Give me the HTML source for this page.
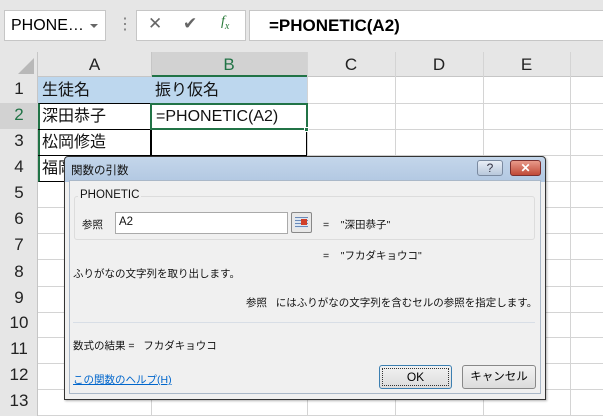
<!DOCTYPE html><html><head><meta charset="utf-8"><style>
*{margin:0;padding:0;box-sizing:border-box}
body{width:603px;height:416px;overflow:hidden;background:#fff;font-family:"Liberation Sans","Noto Sans CJK JP",sans-serif;position:relative}
.a{position:absolute}
.hl{position:absolute;height:1px;background:#d4d4d4}
.vl{position:absolute;width:1px;background:#d4d4d4}
.rh{position:absolute;left:0;width:38px;text-align:center;font-size:17px;color:#222}
.ch{position:absolute;top:52px;height:25px;text-align:center;font-size:17px;line-height:25px;color:#222}
.cell{position:absolute;font-size:16px;line-height:25px;padding-left:4px;padding-top:1px;color:#111}
.dt{position:absolute;font-size:10.5px;color:#111;white-space:nowrap}
</style></head><body>
<div class="a" style="left:0;top:0;width:603px;height:52px;background:#e6e6e6"></div>
<div class="a" style="left:4px;top:10px;width:102px;height:31px;background:#fff;border:1px solid #c6c6c6;font-size:16px;line-height:29px;padding-left:6px;white-space:nowrap;overflow:hidden">PHONE…</div>
<div class="a" style="left:90px;top:24px;width:0;height:0;border-left:4px solid transparent;border-right:4px solid transparent;border-top:4px solid #666"></div>
<div class="a" style="left:117px;top:14px;font-size:16px;color:#777">⋮</div>
<div class="a" style="left:136px;top:10px;width:110px;height:31px;background:#fff;border:1px solid #c6c6c6"></div>
<div class="a" style="left:148px;top:14px;font-size:17px;color:#666">✕</div>
<div class="a" style="left:183px;top:14px;font-size:17px;color:#666">✔</div>
<div class="a" style="left:221px;top:14px;font-size:14px;color:#2a7a3a;font-style:italic;font-family:'Liberation Serif',serif">f<sub style="font-size:10px">x</sub></div>
<div class="a" style="left:249px;top:10px;width:360px;height:31px;background:#fff;border:1px solid #c6c6c6;font-size:17px;font-weight:bold;line-height:29px;padding-left:19px">=PHONETIC(A2)</div>
<!-- headers -->
<div class="a" style="left:0;top:52px;width:603px;height:25px;background:#e6e6e6;border-bottom:1px solid #c6c6c6"></div>
<div class="a" style="left:0;top:52px;width:38px;height:364px;background:#e6e6e6;border-right:1px solid #c6c6c6"></div>
<div class="a" style="left:18px;top:58px;width:0;height:0;border-left:16px solid transparent;border-bottom:16px solid #b8b8b8"></div>
<div class="ch" style="left:38px;width:113px">A</div>
<div class="ch" style="left:151px;width:156px;background:#d2d2d2;border-bottom:2px solid #217346;color:#217346">B</div>
<div class="ch" style="left:307px;width:88px">C</div>
<div class="ch" style="left:395px;width:88px">D</div>
<div class="ch" style="left:483px;width:87px">E</div>
<div class="vl" style="left:151px;top:52px;height:25px;background:#c6c6c6"></div>
<div class="vl" style="left:307px;top:52px;height:364px"></div>
<div class="vl" style="left:395px;top:52px;height:364px"></div>
<div class="vl" style="left:483px;top:52px;height:364px"></div>
<div class="vl" style="left:570px;top:52px;height:364px"></div>
<div class="vl" style="left:151px;top:77px;height:339px"></div>
<div class="a" style="left:0;top:103px;width:38px;height:26px;background:#d2d2d2"></div>
<div class="hl" style="left:38px;top:103px;width:565px"></div>
<div class="hl" style="left:38px;top:129px;width:565px"></div>
<div class="hl" style="left:38px;top:155px;width:565px"></div>
<div class="hl" style="left:38px;top:181px;width:565px"></div>
<div class="hl" style="left:38px;top:207px;width:565px"></div>
<div class="hl" style="left:38px;top:233px;width:565px"></div>
<div class="hl" style="left:38px;top:259px;width:565px"></div>
<div class="hl" style="left:38px;top:286px;width:565px"></div>
<div class="hl" style="left:38px;top:312px;width:565px"></div>
<div class="hl" style="left:38px;top:337px;width:565px"></div>
<div class="hl" style="left:38px;top:363px;width:565px"></div>
<div class="hl" style="left:38px;top:389px;width:565px"></div>
<div class="hl" style="left:38px;top:415px;width:565px"></div>
<div class="rh" style="top:79px">1</div>
<div class="rh" style="top:105px;color:#217346">2</div>
<div class="rh" style="top:131px">3</div>
<div class="rh" style="top:157px">4</div>
<div class="rh" style="top:183px">5</div>
<div class="rh" style="top:209px">6</div>
<div class="rh" style="top:235px">7</div>
<div class="rh" style="top:262px">8</div>
<div class="rh" style="top:288px">9</div>
<div class="rh" style="top:313px">10</div>
<div class="rh" style="top:339px">11</div>
<div class="rh" style="top:365px">12</div>
<div class="rh" style="top:391px">13</div>
<!-- cells -->
<div class="a" style="left:38px;top:77px;width:269px;height:26px;background:#bdd7ee"></div>
<div class="cell" style="left:38px;top:77px">生徒名</div>
<div class="cell" style="left:151px;top:77px">振り仮名</div>
<div class="a" style="left:38px;top:103px;width:113px;height:79px;border:1px solid #000;border-left:2px solid #217346"></div>
<div class="a" style="left:38px;top:129px;width:113px;height:1px;background:#000"></div>
<div class="a" style="left:38px;top:155px;width:113px;height:1px;background:#000"></div>
<div class="a" style="left:151px;top:103px;width:156px;height:53px;border:1px solid #000"></div>
<div class="cell" style="left:38px;top:103px">深田恭子</div>
<div class="cell" style="left:38px;top:129px">松岡修造</div>
<div class="cell" style="left:38px;top:155px">福岡</div>
<div class="a" style="left:150px;top:103px;width:158px;height:27px;border:2px solid #217346;background:#fff"></div>
<div class="cell" style="left:152px;top:103px">=PHONETIC(A2)</div>
<div class="a" style="left:304px;top:127px;width:5px;height:5px;background:#217346;border:1px solid #fff"></div>
<!-- dialog -->
<div class="a" style="left:64px;top:156px;width:482px;height:244px;border:1px solid #333;border-radius:4px 4px 0 0;background:linear-gradient(#c4d6ea,#b2c8e2 25px,#f0f0f0 25px);box-shadow:1px 1px 2px rgba(0,0,0,.3)"></div>
<div class="a" style="left:69px;top:180px;width:472px;height:214px;background:#f0f0f0;border:1px solid #aab8c8"></div>
<div class="dt" style="left:71px;top:162px;font-size:11.5px">関数の引数</div>
<div class="a" style="left:477px;top:160px;width:26px;height:16px;border:1px solid #7a8aa0;border-radius:3px;background:linear-gradient(#e8eef6,#b8c8dc);font-size:12px;text-align:center;line-height:14px;color:#334">?</div>
<div class="a" style="left:510px;top:160px;width:31px;height:16px;border:1px solid #7a3030;border-radius:3px;background:linear-gradient(#e89a8a,#c04a38);font-size:12px;font-weight:bold;text-align:center;line-height:14px;color:#fff">✕</div>
<div class="a" style="left:74px;top:196px;width:461px;height:44px;border:1px solid #dcdcdc;border-radius:3px"></div>
<div class="dt" style="left:78px;top:189px;font-size:11.5px;background:#f0f0f0;padding:0 2px">PHONETIC</div>
<div class="dt" style="left:82px;top:217px">参照</div>
<div class="a" style="left:115px;top:212px;width:173px;height:22px;background:#fff;border:1px solid #aaa"></div>
<div class="dt" style="left:119px;top:216px;font-size:11.5px">A2</div>
<div class="a" style="left:291px;top:212px;width:21px;height:21px;border:1px solid #888;border-radius:2px;background:#e8e8e8"><div style="margin:4px 3px;width:13px;height:11px;background:repeating-linear-gradient(#6a8ab8 0 1px,#dce6f2 1px 3px)"></div><div style="position:absolute;left:9px;top:6px;width:6px;height:6px;background:#d0402a"></div></div>
<div class="dt" style="left:323px;top:217px">=&nbsp;&nbsp;&nbsp;&nbsp;"深田恭子"</div>
<div class="dt" style="left:323px;top:248px">=&nbsp;&nbsp;&nbsp;&nbsp;"フカダキョウコ"</div>
<div class="dt" style="left:73px;top:266px">ふりがなの文字列を取り出します。</div>
<div class="dt" style="left:246px;top:295px">参照&nbsp;&nbsp;&nbsp;にはふりがなの文字列を含むセルの参照を指定します。</div>
<div class="a" style="left:73px;top:322px;width:462px;height:1px;background:#d8dee6"></div>
<div class="dt" style="left:73px;top:338px">数式の結果 =&nbsp;&nbsp;&nbsp;フカダキョウコ</div>
<div class="dt" style="left:73px;top:372px;color:#0066cc;text-decoration:underline">この関数のヘルプ(H)</div>
<div class="a" style="left:379px;top:365px;width:73px;height:24px;border:1px solid #3c7fb1;border-radius:3px;background:linear-gradient(#f2f2f2,#dcdcdc);font-size:12px;text-align:center;line-height:22px;outline:1px dotted #333;outline-offset:-4px">OK</div>
<div class="a" style="left:462px;top:365px;width:74px;height:24px;border:1px solid #888;border-radius:3px;background:linear-gradient(#f2f2f2,#dcdcdc);font-size:11.5px;text-align:center;line-height:22px">キャンセル</div>
</body></html>
